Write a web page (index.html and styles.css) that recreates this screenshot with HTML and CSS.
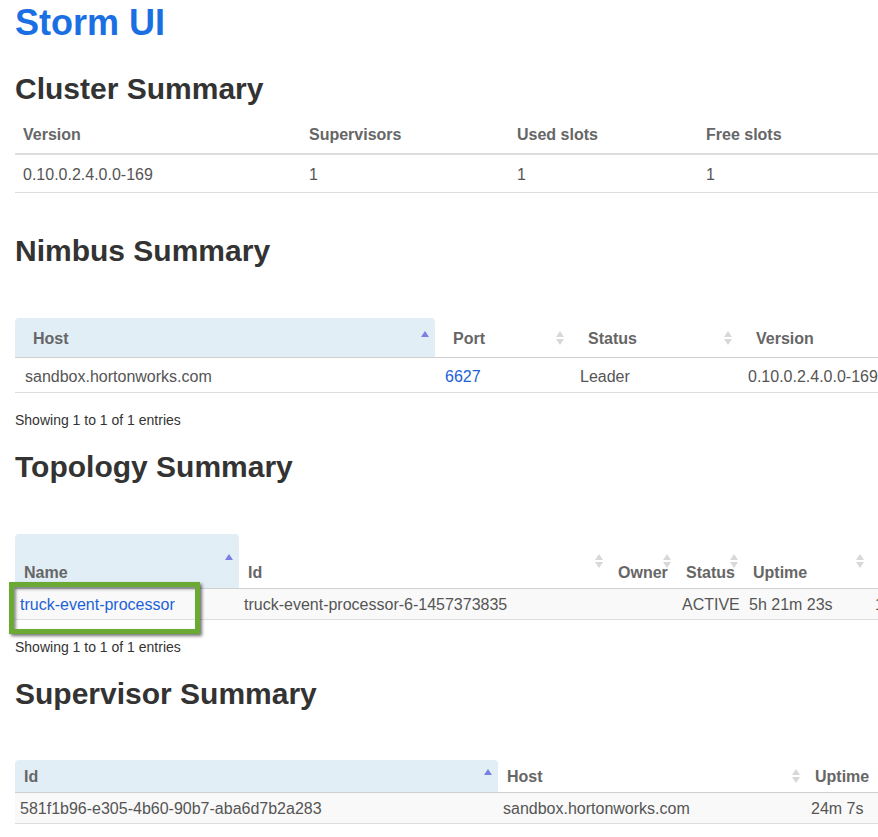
FILE: index.html
```html
<!DOCTYPE html>
<html>
<head>
<meta charset="utf-8">
<title>Storm UI</title>
<link rel="stylesheet" href="styles.css">
</head>
<body>
<h1 class="brand">Storm UI</h1>

<section class="block block-cluster">
  <h2 class="section-title">Cluster Summary</h2>
  <table class="tbl tbl-cluster">
    <colgroup>
      <col class="w286"><col class="w208"><col class="w189"><col class="w200">
    </colgroup>
    <thead>
      <tr><th>Version</th><th>Supervisors</th><th>Used slots</th><th>Free slots</th></tr>
    </thead>
    <tbody>
      <tr><td>0.10.0.2.4.0.0-169</td><td>1</td><td>1</td><td>1</td></tr>
    </tbody>
  </table>
</section>

<section class="block block-nimbus">
  <h2 class="section-title">Nimbus Summary</h2>
  <table class="tbl dt dt-nimbus">
    <colgroup>
      <col class="w420"><col class="w135"><col class="w168"><col class="w200">
    </colgroup>
    <thead>
      <tr><th class="sort asc">Host</th><th class="sort">Port</th><th class="sort">Status</th><th class="sort">Version</th></tr>
    </thead>
    <tbody>
      <tr><td>sandbox.hortonworks.com</td><td><a href="#">6627</a></td><td>Leader</td><td>0.10.0.2.4.0.0-169</td></tr>
    </tbody>
  </table>
  <p class="info">Showing 1 to 1 of 1 entries</p>
</section>

<section class="block block-topology">
  <h2 class="section-title">Topology Summary</h2>
  <div class="tbl-wrap">
    <table class="tbl dt dt-compact dt-topology">
      <colgroup>
        <col class="w224"><col class="w370"><col class="w68"><col class="w67"><col class="w126"><col class="w135">
      </colgroup>
      <thead>
        <tr><th class="sort asc">Name</th><th class="sort">Id</th><th class="sort">Owner</th><th class="sort">Status</th><th class="sort">Uptime</th><th class="sort">Num workers</th></tr>
      </thead>
      <tbody>
        <tr class="odd"><td><a href="#">truck-event-processor</a></td><td>truck-event-processor-6-1457373835</td><td></td><td>ACTIVE</td><td>5h 21m 23s</td><td>1</td></tr>
      </tbody>
    </table>
    <div class="highlight"></div>
  </div>
  <p class="info">Showing 1 to 1 of 1 entries</p>
</section>

<section class="block block-supervisor">
  <h2 class="section-title">Supervisor Summary</h2>
  <table class="tbl dt dt-compact dt-supervisor">
    <colgroup>
      <col class="w483"><col class="w308"><col class="w150">
    </colgroup>
    <thead>
      <tr><th class="sort asc">Id</th><th class="sort">Host</th><th class="sort">Uptime</th></tr>
    </thead>
    <tbody>
      <tr class="odd"><td>581f1b96-e305-4b60-90b7-aba6d7b2a283</td><td>sandbox.hortonworks.com</td><td>24m 7s</td></tr>
    </tbody>
  </table>
</section>
</body>
</html>
```

FILE: styles.css
```css
html, body {
  margin: 0;
}

body {
  padding: 0 15px;
  font-family: "Liberation Sans", Arial, Helvetica, sans-serif;
  font-size: 16px;
  color: #555;
  background: #fff;
  overflow-x: hidden;
}

a {
  color: #1d61d6;
  text-decoration: none;
}

.brand {
  margin: 3px 0 0;
  font-size: 36px;
  line-height: 40px;
  font-weight: bold;
  color: #1a6fe3;
}

.section-title {
  margin: 0;
  font-size: 30px;
  line-height: 36px;
  font-weight: bold;
  color: #333;
}

.block-cluster .section-title { margin-top: 28px; margin-bottom: 8px; }
.block-nimbus .section-title { margin-top: 40px; margin-bottom: 49px; }
.block-topology .section-title { margin-top: 19px; margin-bottom: 49px; }
.block-supervisor .section-title { margin-top: 19px; margin-bottom: 48px; }

.info {
  margin: 17px 0 0;
  font-size: 14px;
  line-height: 20px;
  color: #333;
}

/* column widths */
.w67 { width: 67px; }
.w68 { width: 68px; }
.w126 { width: 126px; }
.w135 { width: 135px; }
.w150 { width: 150px; }
.w168 { width: 168px; }
.w189 { width: 189px; }
.w200 { width: 200px; }
.w208 { width: 208px; }
.w224 { width: 224px; }
.w286 { width: 286px; }
.w308 { width: 308px; }
.w370 { width: 370px; }
.w420 { width: 420px; }
.w483 { width: 483px; }

.tbl {
  border-collapse: separate;
  border-spacing: 0;
  table-layout: fixed;
}

.tbl-cluster { width: 883px; }
.dt-nimbus { width: 923px; }
.dt-topology { width: 990px; }
.dt-supervisor { width: 941px; }

.tbl th,
.tbl td {
  box-sizing: border-box;
  text-align: left;
  white-space: nowrap;
  line-height: 20px;
}

.tbl th {
  font-weight: bold;
  color: #666;
}

/* cluster (bootstrap style) */
.tbl-cluster th {
  height: 40px;
  padding: 2px 8px 0;
  border-bottom: 2px solid #ddd;
  vertical-align: middle;
}

.tbl-cluster td {
  height: 38px;
  padding: 2px 8px 0;
  border-bottom: 1px solid #ddd;
  vertical-align: middle;
}

/* datatables style */
.dt th {
  position: relative;
  border-bottom: 1px solid #cfcfcf;
}

.dt td {
  border-bottom: 1px solid #ddd;
  vertical-align: middle;
}

.dt th.asc {
  background: #e2eef6;
  border-radius: 4px 4px 0 0;
}

.dt th.sort::before,
.dt th.sort::after {
  content: "";
  position: absolute;
  right: 6px;
  top: 50%;
  width: 0;
  height: 0;
  border-left: 4px solid transparent;
  border-right: 4px solid transparent;
}

.dt th.sort::before {
  margin-top: -7px;
  border-bottom: 6px solid #d8d8d8;
}

.dt th.sort::after {
  margin-top: 1px;
  border-top: 6px solid #d8d8d8;
}

.dt th.asc::before {
  border-bottom-color: #7b7fe2;
}

.dt th.asc::after {
  display: none;
}

.dt-nimbus th {
  height: 40px;
  padding: 2px 18px 0;
  vertical-align: middle;
}

.dt-nimbus td {
  height: 35px;
  padding: 4px 10px 0;
}

.dt-compact th {
  padding: 0 9px;
}

.dt-compact td {
  padding: 2px 5px 0;
}

.dt-compact tr.odd td {
  background: #f9f9f9;
}

.dt-topology th {
  height: 55px;
  padding-bottom: 5px;
  vertical-align: bottom;
}

.dt-topology td {
  height: 31px;
}

.dt-supervisor th {
  height: 33px;
  padding-top: 2px;
  vertical-align: middle;
}

.dt-supervisor td {
  height: 31px;
}

/* annotation overlay */
.tbl-wrap {
  position: relative;
}

.highlight {
  position: absolute;
  left: -6px;
  top: 48px;
  width: 191px;
  height: 52px;
  box-sizing: border-box;
  border: 5px solid #6aa933;
  box-shadow: 2px 2px 3px rgba(0, 0, 0, 0.55), inset 2px 2px 3px rgba(0, 0, 0, 0.45);
}
```
